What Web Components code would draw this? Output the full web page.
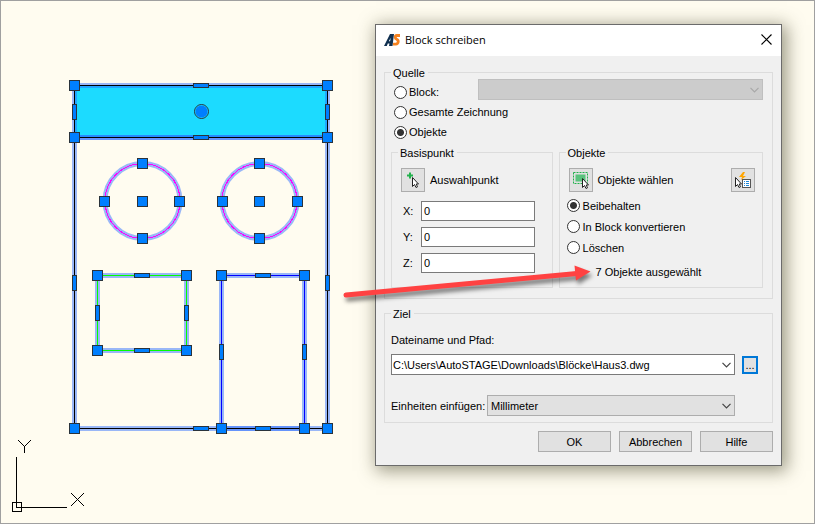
<!DOCTYPE html>
<html lang="de">
<head>
<meta charset="utf-8">
<title>Block schreiben</title>
<style>
  html, body { margin: 0; height: 100%; }
  body { font: 11px/16px "Liberation Sans", Arial, sans-serif; color: #000; }
  .pair { display: grid; grid-template-columns: 162fr 205fr; gap: 6px; }
</style>
</head>
<body>
<cad-workspace>
  <cad-drawing slot="drawing"></cad-drawing>
  <cad-axes slot="axes"></cad-axes>
  <dialog-window slot="dialog" heading="Block schreiben">
    <group-box label="Quelle">
      <source-panel></source-panel>
      <div class="pair">
        <group-box label="Basispunkt" compact><base-point></base-point></group-box>
        <group-box label="Objekte" compact><object-panel></object-panel></group-box>
      </div>
    </group-box>
    <group-box label="Ziel" last><target-panel></target-panel></group-box>
    <dialog-actions></dialog-actions>
  </dialog-window>
  <callout-arrow slot="callout"></callout-arrow>
</cad-workspace>

<script>
const BASE = `<style>
  *, *::before { box-sizing: border-box; }
  :host { display: block; }
  svg { display: block; }
  button, input, select { font: inherit; color: inherit; margin: 0; border-radius: 0; }
  label { display: flex; align-items: center; }
  input[type=radio] { appearance: none; width: 13px; height: 13px; margin: 0; flex: none;
    border: 1px solid #333; border-radius: 50%; background: #fff; }
  input[type=radio]:checked { background: radial-gradient(circle, #333 0 3px, #fff 4px); }
  .tool { width: 24px; height: 24px; padding: 0; border: 1px solid #adadad; background: #e1e1e1; }
  .combo { display: grid; height: 21px; }
  .combo > * { grid-area: 1 / 1; }
  .combo svg { align-self: center; justify-self: end; margin-right: 4px; pointer-events: none; }
  .combo select { appearance: none; width: 100%; height: 21px; padding: 0 20px 0 3px;
    border: 1px solid #adadad; background: #e1e1e1; }
  .combo select:disabled { background: #ccc; border-color: #bfbfbf; opacity: 1; }
</style>`;
const chevron = c => `<svg width="9" height="6" viewBox="0 0 9 6" aria-hidden="true"><path d="M.5 .8 4.5 4.8 8.5 .8" fill="none" stroke="${c}" stroke-width="1.2"/></svg>`;
const cursor = (x, y) => `<path transform="translate(${x} ${y})" d="M.5 .5V9.5L2.5 7.5 4 10.5 5.5 9.8 4.2 7H6.5Z" fill="#fff" stroke="#222"/>`;

function define(name, markup) {
  customElements.define(name, class extends HTMLElement {
    constructor() {
      super();
      const t = document.createElement('template');
      t.innerHTML = BASE + (typeof markup === 'function' ? markup(this) : markup);
      this.attachShadow({ mode: 'open' }).append(t.content.cloneNode(true));
    }
  });
}

define('cad-workspace', `<style>
  :host { position: relative; min-height: 100vh; box-sizing: border-box; border: 1px solid #a0a0a0; background: #fffcf0;
    display: grid; grid-template-columns: 374fr 407fr 32fr; align-items: start; overflow: hidden; }
  .left { align-self: stretch; display: flex; flex-direction: column; justify-content: space-between; }
</style>
<div class="left"><slot name="drawing"></slot><slot name="axes"></slot></div>
<slot name="dialog"></slot><slot name="callout"></slot>`);

/* House drawing: halos, thin entity lines, then the grips. */
define('cad-drawing', () => {
  const sq = [[74,85],[327,85],[74,137],[327,137],[74,428],[327,428],[221,428],[304,428],
    [142,163],[104,201],[142,201],[179,201],[142,238],[259,163],[222,201],[259,201],[297,201],[259,238],
    [97,275],[186,275],[97,350],[186,350],[221,275],[304,275]];
  const h = [[201,85],[201,137],[201,428],[142,275],[142,350],[263,275],[263,428]];
  const v = [[74,112],[327,112],[74,283],[327,283],[97,313],[186,313],[221,352],[304,352]];
  const halo = 'stroke="#2b6cff" stroke-opacity=".48" stroke-width="5" fill="none"';
  return `<svg width="374" height="436" viewBox="1 1 374 436" role="img" aria-label="Haus">
    <rect x="74.5" y="85.5" width="253" height="52" fill="#1cdbff"/>
    <g ${halo}>
      <rect x="74.5" y="85.5" width="253" height="52"/>
      <path d="M74.5 135V428.5H327.5V135M72 137.5H330"/>
      <circle cx="142.5" cy="201" r="37.5"/><circle cx="259.5" cy="201" r="37.5"/>
      <rect x="97.5" y="275.5" width="89" height="75"/>
      <rect x="221.5" y="275.5" width="83" height="153"/>
    </g>
    <g fill="none">
      <path d="M74.5 85.5H327.5V428.5H74.5ZM74.5 137.5H327.5" stroke="#000"/>
      <circle cx="142.5" cy="201" r="37.5" stroke="#f0f" shape-rendering="crispEdges"/>
      <circle cx="259.5" cy="201" r="37.5" stroke="#f0f" shape-rendering="crispEdges"/>
      <rect x="97.5" y="275.5" width="89" height="75" stroke="#0f0"/>
      <path d="M221.5 428.5V275.5H304.5V428.5" stroke="#00f"/>
    </g>
    <g fill="#007fff" stroke="#2a333c">
      <g>${sq.map(([x, y]) => `<rect x="${x - 4.5}" y="${y - 4.5}" width="10" height="10"/>`).join('')}</g>
      <g>${h.map(([x, y]) => `<rect x="${x - 7.5}" y="${y - 1.5}" width="15" height="4"/>`).join('')}</g>
      <g>${v.map(([x, y]) => `<rect x="${x - 1.5}" y="${y - 7.5}" width="4" height="15"/>`).join('')}</g>
      <circle cx="201.5" cy="111.5" r="7" fill="#1cdbff"/><circle cx="201.5" cy="111.5" r="6" stroke="none"/>
    </g>
  </svg>`;
});

define('cad-axes', `<svg width="100" height="83" viewBox="1 440 100 83" role="img" aria-label="Koordinatensymbol">
  <g fill="none" stroke="#000"><path shape-rendering="crispEdges" d="M16.5 457V507.5H67M12.5 502.5H21.5V511.5H12.5Z"/>
  <path d="M18 440 24.5 446.5 31 440M24.5 446V453M71 493 84 506M84 493 71 506"/></g></svg>`);

define('dialog-window', `<style>
  :host { margin: 23px 0 0; border: 1px solid #6b6b6b; background: #f0f0f0; box-shadow: 3px 3px 16px 2px rgba(60,60,30,.5); }
  header { display: flex; align-items: center; height: 31px; padding: 0 7px 2px 8px; background: #fff; }
  h1 { flex: 1; margin: 0 0 0 4px; font: 11px/16px "Open Sans", "Noto Sans", sans-serif; }
  button { padding: 0; border: 0; background: none; width: 15px; height: 15px; display: grid; place-items: center; }
  main { display: flex; flex-direction: column; gap: 5px; padding: 7px 8px 13px; }
</style>
<header>
  <svg width="17" height="14" viewBox="0 0 17 14" aria-hidden="true">
    <path d="M0 13 6 1H10L8.500 13H5L5.500 10.500H3.800L2.800 13ZM4.800 8.300H6.100L6.700 4.800Z" fill="#0f2f4f" fill-rule="evenodd"/>
    <path d="M16 2.500H12.800Q11.200 2.700 11.200 4.300 11.200 5.600 12.600 6.200 14.600 7.200 14.200 9 13.800 11 11.800 11.200H9" fill="none" stroke="#f58220" stroke-width="2.800"/>
  </svg>
  <h1></h1>
  <button aria-label="Schließen"><svg width="11" height="11" viewBox="0 0 11 11"><path d="M.5 .5 10.500 10.500M10.500 .5 .5 10.500" stroke="#000" stroke-width="1.100"/></svg></button>
</header>
<main><slot></slot></main>`);

define('group-box', `<style>
  fieldset { margin: 0; min-width: 0; border: 1px solid #dcdcdc; padding: 0 9px 10px 6px; }
  legend { padding: 2px 3px 0 2px; height: 18px; }
  :host([compact]) fieldset { padding: 7px 7px 0 9px; height: 145px; }
  :host([compact]) legend { margin-left: -3px; }
  :host([last]) fieldset { padding-bottom: 6px; }
</style><fieldset><legend></legend><slot></slot></fieldset>`);

define('source-panel', `<style>
  .rows { display: grid; grid-template-columns: 87px 1fr; padding-top: 1px; margin-bottom: 1px; }
  label { gap: 2px; height: 20px; padding-left: 3px; white-space: nowrap; }
  .combo { margin-top: -3px; }
  .wide { grid-column: 1 / -1; }
</style>
<div class="rows">
  <label><input type="radio" name="src">Block:</label>
  <div class="combo"><select disabled aria-label="Block"></select>${chevron('#a8a8a8')}</div>
  <label class="wide"><input type="radio" name="src">Gesamte Zeichnung</label>
  <label class="wide"><input type="radio" name="src" checked>Objekte</label>
</div>`);

define('base-point', `<style>
  .pick { display: flex; align-items: center; gap: 5px; margin-bottom: 9px; }
  .xyz { display: grid; grid-template-columns: 18px 1fr; gap: 6px 0; padding: 0 10px 0 2px; }
  .xyz input { width: 100%; height: 20px; padding: 0 2px; border: 1px solid #7a7a7a; background: #fff; }
</style>
<div class="pick"><button class="tool" id="pick" aria-label="Auswahlpunkt"><svg width="22" height="22" viewBox="0 0 22 22">
  <path d="M8 3.500V9.500M5 6.500H11" stroke="#22b14c" stroke-width="2"/>${cursor(10, 8)}</svg></button><span>Auswahlpunkt</span></div>
<div class="xyz">
  <label for="x">X:</label><input id="x" value="0">
  <label for="y">Y:</label><input id="y" value="0">
  <label for="z">Z:</label><input id="z" value="0">
</div>`);

define('object-panel', `<style>
  .pick { display: flex; align-items: center; gap: 5px; margin-bottom: 3px; }
  .pick span { flex: 1; }
  label { gap: 3px; height: 21px; width: max-content; margin-left: -2px; }
  p { margin: 6px 0 0 27px; }
</style>
<div class="pick"><button class="tool" aria-label="Objekte wählen"><svg width="22" height="22" viewBox="0 0 22 22">
  <rect x="3.500" y="3.500" width="14" height="11" fill="none" stroke="#22b14c" stroke-dasharray="2 1"/>
  <rect x="5.500" y="5.500" width="10" height="7" fill="#59c27c"/>${cursor(12, 9)}</svg></button>
  <span>Objekte wählen</span>
  <button class="tool" aria-label="Schnellauswahl"><svg width="22" height="22" viewBox="0 0 22 22">
  <path d="M11 3 7 8H10L9 11 14 7H11L13 3Z" fill="#ffa500"/>${cursor(3, 8)}
  <rect x="10.500" y="10.500" width="8" height="8" fill="#fff" stroke="#555"/>
  <path d="M12 12.500H13M12 14.500H13M12 16.500H13M14 12.500H17M14 14.500H17M14 16.500H17" stroke="#1c86d8"/></svg></button></div>
<label><input type="radio" name="obj" checked>Beibehalten</label>
<label><input type="radio" name="obj">In Block konvertieren</label>
<label><input type="radio" name="obj">Löschen</label>
<p>7 Objekte ausgewählt</p>`);

define('target-panel', `<style>
  .path { display: grid; grid-template-columns: 1fr 16px; gap: 7px; padding-right: 5px; align-items: center; margin: 6px 0 20px; }
  .cap { margin-top: 10px; height: 16px; }
  .path input { width: 100%; height: 21px; padding: 0 18px 0 1px; border: 1px solid #7a7a7a; background: #fff; }
  .more { width: 16px; height: 18px; padding: 0; border: 2px solid #0078d7; background: #e1e1e1; line-height: 12px; }
  .unit { display: grid; grid-template-columns: 96px 1fr; padding-right: 28px; }
  label { white-space: nowrap; }
</style>
<label class="cap" for="file">Dateiname und Pfad:</label>
<div class="path">
  <div class="combo"><input id="file" value="C:\\Users\\AutoSTAGE\\Downloads\\Blöcke\\Haus3.dwg">${chevron('#444')}</div>
  <button class="more" aria-label="Durchsuchen">...</button>
</div>
<div class="unit"><label for="unit">Einheiten einfügen:</label>
  <div class="combo"><select id="unit"><option>Millimeter</option></select>${chevron('#444')}</div></div>`);

define('dialog-actions', `<style>
  :host { display: flex; justify-content: flex-end; gap: 8px; margin-top: 3px; }
  button { width: 73px; height: 21px; padding: 0; border: 1px solid #adadad; background: #e1e1e1; }
</style><button>OK</button><button>Abbrechen</button><button>Hilfe</button>`);

define('callout-arrow', `<style>
  :host { position: absolute; left: 339px; top: 254px; pointer-events: none; }
  svg { filter: drop-shadow(2px 4px 2px rgba(0,0,0,.5)); overflow: visible; }
</style><svg width="260" height="50" viewBox="340 255 260 50" aria-hidden="true">
  <path d="M346 295 577 273.500" stroke="#ff4242" stroke-width="5" stroke-linecap="round"/>
  <path d="M574.500 265.500 590.500 271.500 576 280.500Z" fill="#ff4242"/></svg>`);

for (const g of document.querySelectorAll('group-box'))
  g.shadowRoot.querySelector('legend').textContent = g.getAttribute('label');
for (const d of document.querySelectorAll('dialog-window'))
  d.shadowRoot.querySelector('h1').textContent = d.getAttribute('heading');
</script>
</body>
</html>
